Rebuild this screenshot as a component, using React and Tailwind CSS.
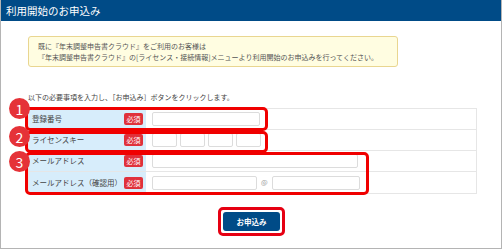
import React from "react";

const font = { fontFamily: '"Noto Sans CJK JP", "Noto Sans", sans-serif' };

const Badge = () => (
  <span className="bg-[#e0313b] text-white text-[7px] leading-[12px] h-[12px] px-[2.5px] rounded-[2px]">必須</span>
);

const Row = ({ label, children, last }) => (
  <div className={`flex h-[21px] ${last ? "" : "border-b border-[#e6e6e6]"}`}>
    <div className="w-[117px] bg-[#d7edfb] flex items-center justify-between pl-[3px] pr-[3px] text-[7.5px] text-[#444] whitespace-nowrap">
      <span>{label}</span>
      <Badge />
    </div>
    <div className="flex-1 flex items-center pl-[6px] gap-[3px]">{children}</div>
  </div>
);

const Input = ({ w }) => (
  <div className={`${w} h-[14px] border border-[#dcdcdc] rounded-[2px] bg-white`} />
);

const Num = ({ n }) => (
  <div className="w-[21px] h-[21px] rounded-full bg-[#e53238] text-white text-[14px] leading-none flex items-center justify-center">
    {n}
  </div>
);

export default function App() {
  return (
    <div style={font} className="relative w-[502px] h-[249px] bg-white border-x border-b border-[#b4b4b4] overflow-hidden">
      <div className="h-[21px] bg-[#004b87] text-white text-[10.5px] leading-[21px] pl-[5px]">利用開始のお申込み</div>
      <div className="px-[27px]">
        <div className="mt-[15px] w-[370px] h-[31px] bg-[#fffde1] border border-[#e9d690] rounded-[3px] pl-[9px] flex flex-col justify-center text-[7px] leading-[11px] text-[#555] whitespace-nowrap">
          <div>既に『年末調整申告書クラウド』をご利用のお客様は</div>
          <div>『年末調整申告書クラウド』の[ライセンス・接続情報]メニューより利用開始のお申込みを行ってください。</div>
        </div>
        <div className="mt-[25px] text-[7px] text-[#444] leading-[11px] whitespace-nowrap">以下の必要事項を入力し、［お申込み］ボタンをクリックします。</div>
        <div className="mt-[5px] w-[449px] border border-[#e6e6e6]">
          <Row label="登録番号">
            <Input w="w-[108px]" />
          </Row>
          <Row label="ライセンスキー">
            <Input w="w-[25px]" />
            <Input w="w-[25px]" />
            <Input w="w-[25px]" />
            <Input w="w-[25px]" />
          </Row>
          <Row label="メールアドレス">
            <Input w="w-[206px]" />
          </Row>
          <Row label="メールアドレス（確認用）" last>
            <Input w="w-[105px]" />
            <span className="text-[7px] text-[#999] px-[1px]">@</span>
            <Input w="w-[88px]" />
          </Row>
        </div>
        <div className="mt-[13px] flex justify-center pl-[1px]">
          <div className="border-[3px] border-[#e60012] rounded-[5px] p-[2px]">
            <div className="w-[57px] h-[19px] bg-[#004b87] rounded-[3px] text-white text-[7.5px] font-bold flex items-center justify-center">お申込み</div>
          </div>
        </div>
      </div>

      <div className="absolute left-[24px] top-[107px] w-[243px] h-[24px] border-[3px] border-[#f00000] rounded-[5px]" />
      <div className="absolute left-[24px] top-[131px] w-[243px] h-[22px] border-[3px] border-[#f00000] rounded-[5px]" />
      <div className="absolute left-[24px] top-[152px] w-[344px] h-[43px] border-[3px] border-[#f00000] rounded-[5px]" />
      <div className="absolute left-[8px] top-[98px]"><Num n="1" /></div>
      <div className="absolute left-[8px] top-[126px]"><Num n="2" /></div>
      <div className="absolute left-[8px] top-[151px]"><Num n="3" /></div>
    </div>
  );
}
